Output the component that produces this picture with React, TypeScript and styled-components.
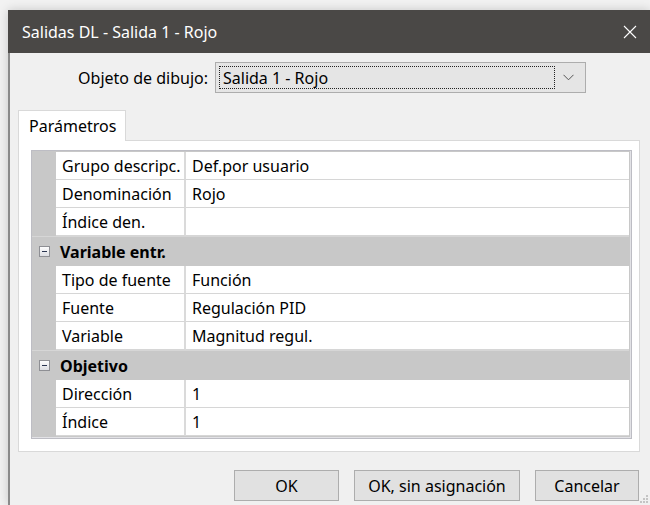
import React from "react"
import styled, { createGlobalStyle } from "styled-components"

const GlobalStyle = createGlobalStyle`
  html, body {
    margin: 0;
    padding: 0;
    background: #f2f2f2;
    font-family: "Noto Sans", "Open Sans", Arial, sans-serif;
    color: #000;
  }
`

const Desktop = styled.div`
  width: 650px;
  height: 505px;
  padding: 10px 0 0 8px;
  box-sizing: border-box;
  overflow: hidden;
`

const Window = styled.div`
  position: relative;
  width: 642px;
  height: 495px;
  display: flex;
  flex-direction: column;
  box-shadow: 0 0 10px rgba(0, 0, 0, 0.18);
`

const TitleBar = styled.div`
  height: 43px;
  flex: none;
  display: flex;
  align-items: center;
  justify-content: space-between;
  padding: 0 13px 0 14px;
  background: #4a4846;
  color: #fff;
  font-size: 16px;
`

const CloseButton = styled.div`
  width: 14px;
  height: 14px;
  display: flex;
  align-items: center;
  justify-content: center;
`

const Body = styled.div`
  flex: 1;
  display: flex;
  flex-direction: column;
  background: #f0f0f0;
  border-left: 2px solid #8a8a8a;
  padding: 9px 0 0 8px;
  font-size: 16px;
`

const ObjectRow = styled.div`
  display: flex;
  align-items: center;
  gap: 7px;
  height: 31px;
`

const ObjectLabel = styled.div`
  width: 190px;
  text-align: right;
`

const Combo = styled.div`
  width: 371px;
  height: 31px;
  box-sizing: border-box;
  display: flex;
  align-items: center;
  padding: 3px 4px 3px 3px;
  background: #e5e5e5;
  border: 1px solid #adadad;
`

const ComboValue = styled.div`
  flex: 1;
  height: 100%;
  box-sizing: border-box;
  display: flex;
  align-items: center;
  padding-left: 3px;
  border: 1px dotted #222;
`

const ComboArrow = styled.div`
  width: 26px;
  display: flex;
  justify-content: center;
`

const TabStrip = styled.div`
  display: flex;
  margin-top: 17px;
`

const Tab = styled.div`
  width: 108px;
  height: 31px;
  box-sizing: border-box;
  display: flex;
  align-items: center;
  padding-left: 10px;
  background: #fff;
  border: 1px solid #d9d9d9;
  border-bottom: none;
  margin-bottom: -1px;
  position: relative;
  z-index: 1;
`

const TabPanel = styled.div`
  width: 622px;
  height: 312px;
  box-sizing: border-box;
  background: #fff;
  border: 1px solid #d9d9d9;
  padding: 9px 0 0 12px;
`

const Grid = styled.div`
  width: 601px;
  box-sizing: border-box;
  border: 1px solid #bdbdc4;
  box-shadow: inset -1px -1px 0 #e2e2e6;
  background: #c8c8c8;
  padding: 1px 2px 2px 0;
`

const Row = styled.div<{ $group?: boolean }>`
  display: grid;
  grid-template-columns: 24px 130px 1fr;
  height: ${(p) => (p.$group ? 30 : 28)}px;
  box-sizing: border-box;
  background: ${(p) => (p.$group ? "#c8c8c8" : "transparent")};
  ${(p) => p.$group && "border-top: 1px solid #d6d6d6;"}
`

const Gutter = styled.div`
  display: flex;
  align-items: center;
  justify-content: center;
`

const NameCell = styled.div`
  display: flex;
  align-items: center;
  padding-left: 6px;
  background: #fff;
  border-bottom: 1px solid #d6d6d6;
  border-right: 2px solid #dadada;
  white-space: nowrap;
`

const ValueCell = styled.div`
  display: flex;
  align-items: center;
  padding-left: 6px;
  background: #fff;
  border-bottom: 1px solid #d6d6d6;
  white-space: nowrap;
`

const GroupTitle = styled.div`
  grid-column: 2 / 4;
  display: flex;
  align-items: center;
  padding-left: 4px;
  font-weight: 700;
`

const Collapse = styled.div`
  width: 11px;
  height: 11px;
  box-sizing: border-box;
  border: 1px solid #8e8f94;
  background: linear-gradient(#fdfdfd, #dcdde2);
  display: flex;
  align-items: center;
  justify-content: center;
  &::after {
    content: "";
    width: 5px;
    height: 1px;
    background: #2a3550;
  }
`

const ButtonRow = styled.div`
  display: flex;
  justify-content: flex-end;
  gap: 15px;
  margin-top: 18px;
  padding-right: 11px;
`

const Button = styled.div<{ $w: number }>`
  width: ${(p) => p.$w}px;
  height: 31px;
  box-sizing: border-box;
  display: flex;
  align-items: center;
  justify-content: center;
  background: #e1e1e1;
  border: 1px solid #adadad;
`

const Grip = styled.svg`
  position: absolute;
  right: 2px;
  bottom: 2px;
`

type Prop = { name: string; value: string }
type Section = { title?: string; items: Prop[] }

const sections: Section[] = [
  {
    items: [
      { name: "Grupo descripc.", value: "Def.por usuario" },
      { name: "Denominación", value: "Rojo" },
      { name: "Índice den.", value: "" },
    ],
  },
  {
    title: "Variable entr.",
    items: [
      { name: "Tipo de fuente", value: "Función" },
      { name: "Fuente", value: "Regulación PID" },
      { name: "Variable", value: "Magnitud regul." },
    ],
  },
  {
    title: "Objetivo",
    items: [
      { name: "Dirección", value: "1" },
      { name: "Índice", value: "1" },
    ],
  },
]

export default function App() {
  return (
    <Desktop>
      <GlobalStyle />
      <Window>
        <TitleBar>
          <span>Salidas DL - Salida 1 - Rojo</span>
          <CloseButton>
            <svg width='14' height='14' viewBox='0 0 14 14'>
              <path d='M1 1L13 13M13 1L1 13' stroke='#fff' strokeWidth='1.1' />
            </svg>
          </CloseButton>
        </TitleBar>
        <Body>
          <ObjectRow>
            <ObjectLabel>Objeto de dibujo:</ObjectLabel>
            <Combo>
              <ComboValue>Salida 1 - Rojo</ComboValue>
              <ComboArrow>
                <svg width='11' height='7' viewBox='0 0 11 7'>
                  <path d='M0.5 0.8L5.5 5.8L10.5 0.8' fill='none' stroke='#555' strokeWidth='1' />
                </svg>
              </ComboArrow>
            </Combo>
          </ObjectRow>
          <TabStrip>
            <Tab>Parámetros</Tab>
          </TabStrip>
          <TabPanel>
            <Grid>
              {sections.map((s, i) => (
                <React.Fragment key={i}>
                  {s.title && (
                    <Row $group>
                      <Gutter>
                        <Collapse />
                      </Gutter>
                      <GroupTitle>{s.title}</GroupTitle>
                    </Row>
                  )}
                  {s.items.map((it) => (
                    <Row key={it.name}>
                      <Gutter />
                      <NameCell>{it.name}</NameCell>
                      <ValueCell>{it.value}</ValueCell>
                    </Row>
                  ))}
                </React.Fragment>
              ))}
            </Grid>
          </TabPanel>
          <ButtonRow>
            <Button $w={105}>OK</Button>
            <Button $w={166}>OK, sin asignación</Button>
            <Button $w={104}>Cancelar</Button>
          </ButtonRow>
        </Body>
        <Grip width='9' height='9' viewBox='0 0 9 9'>
          {[
            [7, 1],
            [4, 4],
            [7, 4],
            [1, 7],
            [4, 7],
            [7, 7],
          ].map(([x, y]) => (
            <rect key={`${x}-${y}`} x={x} y={y} width='2' height='2' fill='#c4c4c4' />
          ))}
        </Grip>
      </Window>
    </Desktop>
  )
}
